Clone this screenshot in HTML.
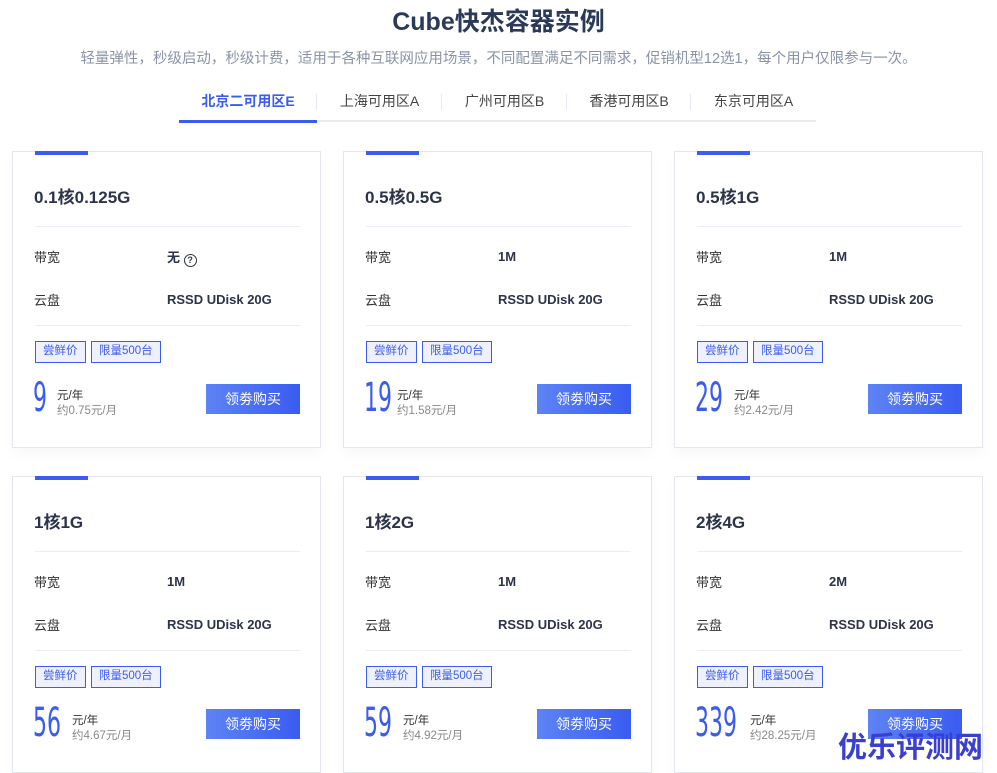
<!DOCTYPE html>
<html><head><meta charset="utf-8"><style>
*{margin:0;padding:0;box-sizing:border-box}
body{width:997px;height:767px;overflow:hidden;background:#fff;font-family:"Liberation Sans","Noto Sans CJK SC",sans-serif;position:relative;color:#333}
.h1{position:absolute;top:2px;left:0;width:997px;text-align:center;font-size:25px;font-weight:bold;color:#2c3a5a}
.sub{position:absolute;top:47px;left:0;width:997px;text-align:center;font-size:14.5px;color:#8a93a6}
.tabs{position:absolute;left:179px;top:88px;width:637px;height:34px;border-bottom:2px solid #e8eaf0}
.tab{position:absolute;top:0;height:32px;line-height:26px;text-align:center;font-size:14px;color:#444}
.tab.act{color:#3a5cf0;font-weight:bold;border-bottom:3px solid #3a5cf0;height:35px}
.sep{position:absolute;top:6px;width:1px;height:16px;background:#e4e8f2}
.card{position:absolute;width:309px;height:297px;border:1px solid #e3e6ee;background:#fff;box-shadow:0 6px 12px rgba(0,0,0,0.03)}
.bar{position:absolute;left:22px;top:-1px;width:53px;height:4px;background:#3a5cf0}
.t{position:absolute;left:21px;top:31px;font-size:17px;font-weight:bold;color:#2c3449}
.d{position:absolute;left:22px;width:265px;height:1px;background:#e9edf5}
.l{position:absolute;left:21px;font-size:13px;color:#333;margin-top:-1px}
.v{position:absolute;left:154px;font-size:13px;font-weight:bold;color:#2c3449;margin-top:1px}
.tag{position:absolute;top:189px;height:22px;line-height:19px;border:1px solid #3a5cf0;background:#eef1fc;color:#3a5cf0;font-size:11.5px;padding:0 7px}
.p{position:absolute;left:20px;top:224px;font-size:40px;color:#3a5cf0;transform:scaleX(0.55);transform-origin:left top;line-height:44px;font-family:"DejaVu Sans","Liberation Sans",sans-serif}
.u1{position:absolute;top:235px;font-size:11.5px;color:#333}
.u2{position:absolute;top:250px;font-size:11.5px;color:#888}
.btn{position:absolute;left:193px;top:232px;width:94px;height:30px;background:linear-gradient(90deg,#5d83f5,#3a5cf0);color:#fff;font-size:14px;text-align:center;line-height:30px}
.wm{position:absolute;left:838px;top:724px;font-size:29px;font-weight:bold;color:#3a3fcf;letter-spacing:0}
</style></head><body>
<div class="h1">Cube快杰容器实例</div>
<div class="sub">轻量弹性，秒级启动，秒级计费，适用于各种互联网应用场景，不同配置满足不同需求，促销机型12选1，每个用户仅限参与一次。</div>
<div class="tabs">
<div class="tab act" style="left:0;width:138px">北京二可用区E</div>
<div class="sep" style="left:137px"></div>
<div class="tab" style="left:138px;width:125px">上海可用区A</div>
<div class="sep" style="left:262px"></div>
<div class="tab" style="left:263px;width:125px">广州可用区B</div>
<div class="sep" style="left:387px"></div>
<div class="tab" style="left:388px;width:124px">香港可用区B</div>
<div class="sep" style="left:511px"></div>
<div class="tab" style="left:512px;width:125px">东京可用区A</div>
</div>

<div class="card" style="left:12px;top:151px"><div class="bar"></div><div class="t">0.1核0.125G</div><div class="d" style="top:74px"></div><div class="l" style="top:96px">带宽</div><div class="v" style="top:94px">无 <span style="display:inline-block;width:13px;height:13px;border:1.3px solid #333;border-radius:50%;font-size:9px;line-height:11px;text-align:center;vertical-align:-1px">?</span></div><div class="l" style="top:139px">云盘</div><div class="v" style="top:139px">RSSD UDisk 20G</div><div class="d" style="top:173px"></div><div class="tag" style="left:22px">尝鲜价</div><div class="tag" style="left:78px">限量500台</div><div class="p">9</div><div class="u1" style="left:44px">元/年</div><div class="u2" style="left:44px">约0.75元/月</div><div class="btn">领劵购买</div></div>

<div class="card" style="left:343px;top:151px"><div class="bar"></div><div class="t">0.5核0.5G</div><div class="d" style="top:74px"></div><div class="l" style="top:96px">带宽</div><div class="v" style="top:96px">1M</div><div class="l" style="top:139px">云盘</div><div class="v" style="top:139px">RSSD UDisk 20G</div><div class="d" style="top:173px"></div><div class="tag" style="left:22px">尝鲜价</div><div class="tag" style="left:78px">限量500台</div><div class="p">19</div><div class="u1" style="left:53px">元/年</div><div class="u2" style="left:53px">约1.58元/月</div><div class="btn">领劵购买</div></div>

<div class="card" style="left:674px;top:151px"><div class="bar"></div><div class="t">0.5核1G</div><div class="d" style="top:74px"></div><div class="l" style="top:96px">带宽</div><div class="v" style="top:96px">1M</div><div class="l" style="top:139px">云盘</div><div class="v" style="top:139px">RSSD UDisk 20G</div><div class="d" style="top:173px"></div><div class="tag" style="left:22px">尝鲜价</div><div class="tag" style="left:78px">限量500台</div><div class="p">29</div><div class="u1" style="left:59px">元/年</div><div class="u2" style="left:59px">约2.42元/月</div><div class="btn">领劵购买</div></div>

<div class="card" style="left:12px;top:476px"><div class="bar"></div><div class="t">1核1G</div><div class="d" style="top:74px"></div><div class="l" style="top:96px">带宽</div><div class="v" style="top:96px">1M</div><div class="l" style="top:139px">云盘</div><div class="v" style="top:139px">RSSD UDisk 20G</div><div class="d" style="top:173px"></div><div class="tag" style="left:22px">尝鲜价</div><div class="tag" style="left:78px">限量500台</div><div class="p">56</div><div class="u1" style="left:59px">元/年</div><div class="u2" style="left:59px">约4.67元/月</div><div class="btn">领劵购买</div></div>

<div class="card" style="left:343px;top:476px"><div class="bar"></div><div class="t">1核2G</div><div class="d" style="top:74px"></div><div class="l" style="top:96px">带宽</div><div class="v" style="top:96px">1M</div><div class="l" style="top:139px">云盘</div><div class="v" style="top:139px">RSSD UDisk 20G</div><div class="d" style="top:173px"></div><div class="tag" style="left:22px">尝鲜价</div><div class="tag" style="left:78px">限量500台</div><div class="p">59</div><div class="u1" style="left:59px">元/年</div><div class="u2" style="left:59px">约4.92元/月</div><div class="btn">领劵购买</div></div>

<div class="card" style="left:674px;top:476px"><div class="bar"></div><div class="t">2核4G</div><div class="d" style="top:74px"></div><div class="l" style="top:96px">带宽</div><div class="v" style="top:96px">2M</div><div class="l" style="top:139px">云盘</div><div class="v" style="top:139px">RSSD UDisk 20G</div><div class="d" style="top:173px"></div><div class="tag" style="left:22px">尝鲜价</div><div class="tag" style="left:78px">限量500台</div><div class="p">339</div><div class="u1" style="left:75px">元/年</div><div class="u2" style="left:75px">约28.25元/月</div><div class="btn">领劵购买</div></div>

<div class="wm">优乐评测网</div>
</body></html>
